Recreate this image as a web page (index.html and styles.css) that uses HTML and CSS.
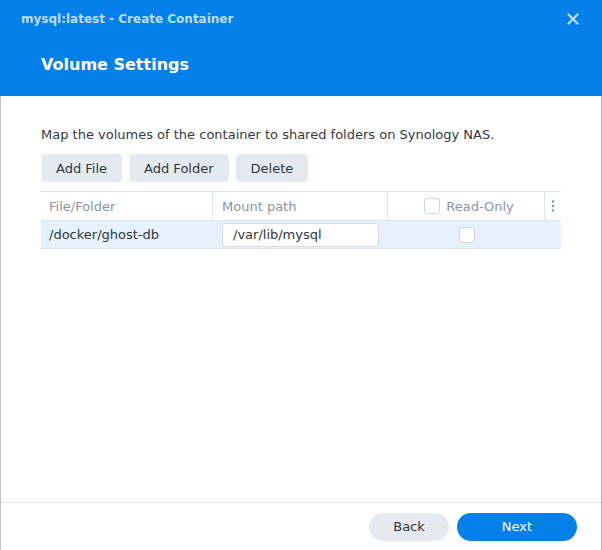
FILE: index.html
```html
<!DOCTYPE html>
<html>
<head>
<meta charset="utf-8">
<link rel="stylesheet" href="styles.css">
</head>
<body>
<div class="dialog">
  <div class="header">
    <div class="titlebar">
      <span class="title">mysql:latest - Create Container</span>
      <svg class="close" width="12" height="12" viewBox="0 0 12 12"><path d="M1.5 1.5 L10.5 10.5 M10.5 1.5 L1.5 10.5" stroke="#c4defa" stroke-width="2.2" stroke-linecap="round"/></svg>
    </div>
    <div class="heading">Volume Settings</div>
  </div>
  <div class="content">
    <p class="desc">Map the volumes of the container to shared folders on Synology NAS.</p>
    <div class="toolbar">
      <button class="btn">Add File</button>
      <button class="btn">Add Folder</button>
      <button class="btn">Delete</button>
    </div>
    <div class="table">
      <div class="row head">
        <div class="cell c1">File/Folder</div>
        <div class="cell c2">Mount path</div>
        <div class="cell c3"><span class="check"></span><span>Read-Only</span></div>
        <div class="cell c4">
          <svg width="4" height="14" viewBox="0 0 4 14"><circle cx="2" cy="2.5" r="1.2" fill="#8a95a1"/><circle cx="2" cy="7" r="1.2" fill="#8a95a1"/><circle cx="2" cy="11.5" r="1.2" fill="#8a95a1"/></svg>
        </div>
      </div>
      <div class="row data">
        <div class="cell c1">/docker/ghost-db</div>
        <div class="cell c2"><div class="input">/var/lib/mysql</div></div>
        <div class="cell c3"><span class="check"></span></div>
        <div class="cell c4"></div>
      </div>
    </div>
  </div>
  <div class="footer">
    <button class="pill back">Back</button>
    <button class="pill next">Next</button>
  </div>
</div>
</body>
</html>
```
FILE: styles.css
```css
html, body {
  margin: 0;
  padding: 0;
  background: #ffffff;
}
body {
  font-family: "DejaVu Sans", Verdana, sans-serif;
  font-size: 13px;
  color: #333a42;
}
.dialog {
  width: 602px;
  height: 550px;
  box-sizing: border-box;
  display: flex;
  flex-direction: column;
  border-right: 1px solid #b4b4b4;
  border-left: 1px solid #c4c4c4;
}
.header {
  background: #0680e9;
  margin: 0 -1px 0 -1px;
  height: 96px;
  flex-shrink: 0;
}
.titlebar {
  height: 38px;
  display: flex;
  align-items: center;
  justify-content: space-between;
  padding: 0 23px 0 21px;
}
.title {
  font-weight: bold;
  font-size: 12px;
  color: #bddbfa;
}
.heading {
  padding: 15px 0 0 41px;
  line-height: 24px;
  font-size: 16px;
  font-weight: bold;
  color: #ffffff;
}
.content {
  flex: 1;
  padding: 0 40px;
}
.desc {
  margin: 30px 0 0 0;
  line-height: 18px;
}
.toolbar {
  display: flex;
  gap: 7px;
  margin-top: 10px;
}
.btn {
  font: inherit;
  color: #2f3740;
  background: #e5eaf1;
  border: none;
  border-radius: 4px;
  height: 28px;
  padding: 0 15px;
}
.table {
  margin-top: 9px;
  width: 520px;
  border-top: 1px solid #dde4ec;
}
.row {
  display: flex;
  border-bottom: 1px solid #dde4ec;
}
.row.head {
  height: 28px;
  color: #8a95a1;
}
.row.data {
  height: 27px;
  background: #e5f1fd;
  color: #2f3740;
}
.cell {
  display: flex;
  align-items: center;
  box-sizing: border-box;
}
.c1 { width: 172px; padding-left: 8px; }
.c2 { width: 175px; padding-left: 9px; }
.c3 { width: 157px; justify-content: center; gap: 6px; padding-left: 6px; }
.data .c3 { padding-left: 0; }
.c4 { width: 16px; justify-content: center; }
.head .c1, .head .c2, .head .c3 { border-right: 1px solid #dde4ec; }
.check {
  display: inline-block;
  width: 16px;
  height: 16px;
  box-sizing: border-box;
  border: 1px solid #ccd5de;
  border-radius: 3px;
  background: #ffffff;
}
.input {
  width: 157px;
  height: 24px;
  box-sizing: border-box;
  border: 1px solid #d3dbe4;
  border-radius: 3px;
  background: #ffffff;
  padding-left: 10px;
  display: flex;
  align-items: center;
  color: #2f3740;
}
.footer {
  height: 48px;
  flex-shrink: 0;
  border-top: 1px solid #dde4ec;
  display: flex;
  align-items: center;
  justify-content: flex-end;
  gap: 8px;
  padding-right: 24px;
  box-sizing: border-box;
}
.pill {
  font: inherit;
  height: 28px;
  border: none;
  border-radius: 14px;
}
.back {
  width: 80px;
  background: #e5eaf1;
  color: #2f3740;
}
.next {
  width: 120px;
  background: #0680e9;
  color: #ffffff;
}
```
